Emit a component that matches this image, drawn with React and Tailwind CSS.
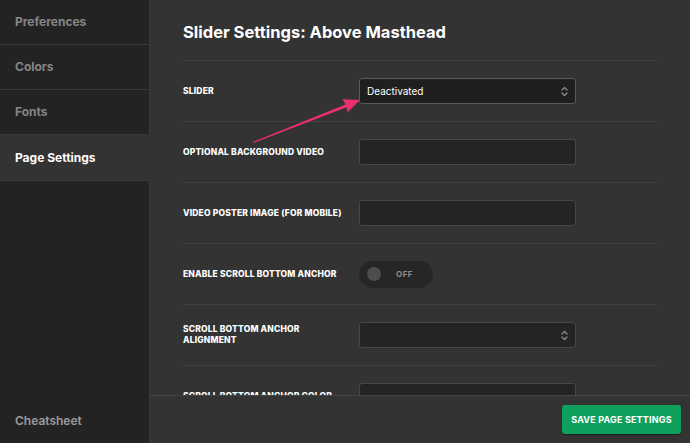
import React from "react";

const font = { fontFamily: "Inter, 'Noto Sans', sans-serif" };

function Chevrons() {
  return (
    <svg width="7" height="11" viewBox="0 0 7 11" className="shrink-0">
      <path d="M1 4 L3.5 1.5 L6 4" fill="none" stroke="#8a8a8a" strokeWidth="1.3" strokeLinecap="round" strokeLinejoin="round" />
      <path d="M1 7 L3.5 9.5 L6 7" fill="none" stroke="#8a8a8a" strokeWidth="1.3" strokeLinecap="round" strokeLinejoin="round" />
    </svg>
  );
}

function Row({ label, children }) {
  return (
    <div className="flex h-[61px] shrink-0 items-center border-t border-[#414141]">
      <div className="w-[176px] pr-2 text-[8.5px] font-extrabold uppercase leading-[11px] tracking-[0.02em] text-white">
        {label}
      </div>
      {children}
    </div>
  );
}

function Input() {
  return <div className="h-[26px] w-[217px] rounded-[3px] border border-[#474747] bg-[#242424]" />;
}

function Select({ value }) {
  return (
    <div className="flex h-[26px] w-[217px] items-center justify-between rounded-[3px] border border-[#5a5a5a] bg-[#1f1f1f] pl-[7px] pr-[7px]">
      <span className="text-[10px] text-white">{value}</span>
      <Chevrons />
    </div>
  );
}

export default function App() {
  const sideItem = "flex h-[45px] items-center border-b border-r border-[#3a3a3a] pl-[15px] text-[12px] font-bold text-[#868686]";
  return (
    <div className="relative flex h-[443px] w-[690px] overflow-hidden bg-[#333333]" style={font}>
      <aside className="flex w-[150px] shrink-0 flex-col bg-[#333333]">
        <div className="flex flex-col bg-[#232323]">
          <div className={sideItem + " h-[43px] rounded-br-[2px]"}>Preferences</div>
          <div className={sideItem + " rounded-br-[2px]"}>Colors</div>
          <div className={sideItem + " rounded-br-[2px]"}>Fonts</div>
        </div>
        <div className="flex h-[45px] items-center pl-[15px] text-[12px] font-bold text-white">Page Settings</div>
        <div className="flex flex-1 flex-col justify-end rounded-tr-[3px] border-r border-t border-[#3a3a3a] bg-[#232323] pb-[13px] pl-[15px]">
          <span className="text-[12px] font-semibold text-[#9a9a9a]">Cheatsheet</span>
        </div>
      </aside>
      <main className="flex min-w-0 flex-1 flex-col">
        <div className="flex-1 overflow-hidden pl-[33px] pr-[33px]">
          <div className="h-[60px] pt-[21px] text-[16.5px] font-bold leading-[22px] text-white">
            Slider Settings: Above Masthead
          </div>
          <Row label="Slider">
            <Select value="Deactivated" />
          </Row>
          <Row label="Optional Background Video">
            <Input />
          </Row>
          <Row label="Video Poster Image (for mobile)">
            <Input />
          </Row>
          <Row label="Enable Scroll Bottom Anchor">
            <div className="flex h-[27px] w-[74px] items-center rounded-full bg-[#262626] pl-[8px]">
              <div className="h-[14px] w-[14px] rounded-full bg-[#4e4e4e]" />
              <span className="ml-[15px] text-[8px] font-bold tracking-[0.06em] text-[#8a8a8a]">OFF</span>
            </div>
          </Row>
          <Row label="Scroll Bottom Anchor Alignment">
            <div className="flex h-[26px] w-[217px] items-center justify-end rounded-[3px] border border-[#474747] bg-[#242424] pr-[7px]">
              <Chevrons />
            </div>
          </Row>
          <Row label="Scroll Bottom Anchor Color">
            <Input />
          </Row>
        </div>
        <footer className="flex h-[48px] shrink-0 items-center justify-end border-t border-[#444444] bg-[#333333] pr-[9px]">
          <button className="h-[29px] w-[119px] rounded-[3px] bg-[#10a05d] text-[9px] font-bold tracking-[0.02em] text-white shadow-[0_1px_1px_rgba(0,0,0,0.4)]">
            SAVE PAGE SETTINGS
          </button>
        </footer>
      </main>
      <svg className="pointer-events-none absolute left-0 top-0" width="690" height="443">
        <polygon
          points="253,142 345.6,104.4 342.5,99.3 360,100 347.7,112.3 346.6,107.2 253.4,143"
          fill="#ec2f6d"
        />
      </svg>
    </div>
  );
}
